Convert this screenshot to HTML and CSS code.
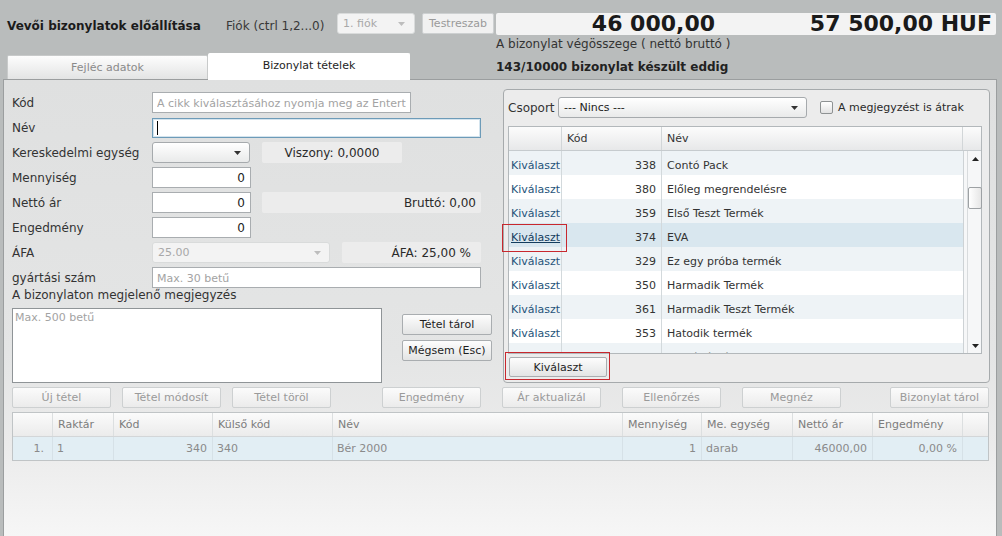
FILE: index.html
```html
<!DOCTYPE html>
<html lang="hu">
<head>
<meta charset="utf-8">
<title>Vevői bizonylatok előállítása</title>
<link rel="stylesheet" href="styles.css">
</head>
<body>
<div class="window">
  <header class="top">
    <div class="top-left">
      <div class="toolbar">
        <span class="title">Vevői bizonylatok előállítása</span>
        <span class="fiok-label">Fiók (ctrl 1,2...0)</span>
        <div class="combo combo-off combo-fiok"><span>1. fiók</span><svg class="caret" viewBox="0 0 7 4"><path d="M0 0h7L3.5 4z"/></svg></div>
        <div class="btn btn-off btn-custom">Testreszab</div>
      </div>
      <div class="tabs">
        <div class="tab">Fejléc adatok</div>
        <div class="tab tab-active">Bizonylat tételek</div>
      </div>
    </div>
    <div class="top-right">
      <div class="totals"><span class="net">46 000,00</span><span class="gross">57 500,00 HUF</span></div>
      <div class="caption">A bizonylat végösszege ( nettó bruttó )</div>
      <div class="count">143/10000 bizonylat készült eddig</div>
    </div>
  </header>

  <main class="panel">
    <div class="upper">
      <section class="form">
        <div class="row"><label>Kód</label><input class="field w-code" placeholder="A cikk kiválasztásához nyomja meg az Entert"></div>
        <div class="row"><label>Név</label><div class="field field-focus w-wide"><span class="text-caret"></span></div></div>
        <div class="row"><label>Kereskedelmi egység</label><div class="combo combo-unit"><span></span><svg class="caret" viewBox="0 0 7 4"><path d="M0 0h7L3.5 4z"/></svg></div><div class="info info-ratio">Viszony: 0,0000</div></div>
        <div class="row"><label>Mennyiség</label><input class="field num w-small" value="0"></div>
        <div class="row"><label>Nettó ár</label><input class="field num w-small" value="0"><div class="info info-gross">Bruttó: 0,00</div></div>
        <div class="row"><label>Engedmény</label><input class="field num w-small" value="0"></div>
        <div class="row"><label>ÁFA</label><div class="combo combo-off combo-vat"><span>25.00</span><svg class="caret" viewBox="0 0 7 4"><path d="M0 0h7L3.5 4z"/></svg></div><div class="info info-vat">ÁFA: 25,00 %</div></div>
        <div class="row row-last"><label>gyártási szám</label><input class="field w-wide" placeholder="Max. 30 betű"></div>
        <div class="note-label">A bizonylaton megjelenő megjegyzés</div>
        <div class="note-area">
          <textarea class="note" placeholder="Max. 500 betű"></textarea>
          <div class="note-buttons">
            <div class="btn btn-note">Tétel tárol</div>
            <div class="btn btn-note">Mégsem (Esc)</div>
          </div>
        </div>
      </section>

      <section class="picker">
        <div class="picker-top">
          <span class="picker-label">Csoport</span>
          <div class="combo combo-group"><span>--- Nincs ---</span><svg class="caret" viewBox="0 0 7 4"><path d="M0 0h7L3.5 4z"/></svg></div>
          <span class="check"></span>
          <span class="check-label">A megjegyzést is átrak</span>
        </div>
        <div class="pgrid">
          <div class="pgrid-head">
            <span class="c1"></span><span class="c2 head-left">Kód</span><span class="c3">Név</span><span class="c4"></span>
          </div>
          <div class="pgrid-body">
            <div class="rows">
              <div class="prow alt"><span class="c1">Kiválaszt</span><span class="c2">338</span><span class="c3">Contó Pack</span></div>
              <div class="prow"><span class="c1">Kiválaszt</span><span class="c2">380</span><span class="c3">Előleg megrendelésre</span></div>
              <div class="prow alt"><span class="c1">Kiválaszt</span><span class="c2">359</span><span class="c3">Első Teszt Termék</span></div>
              <div class="prow sel"><span class="c1 marked">Kiválaszt</span><span class="c2">374</span><span class="c3">EVA</span></div>
              <div class="prow alt"><span class="c1">Kiválaszt</span><span class="c2">329</span><span class="c3">Ez egy próba termék</span></div>
              <div class="prow"><span class="c1">Kiválaszt</span><span class="c2">350</span><span class="c3">Harmadik Termék</span></div>
              <div class="prow alt"><span class="c1">Kiválaszt</span><span class="c2">361</span><span class="c3">Harmadik Teszt Termék</span></div>
              <div class="prow"><span class="c1">Kiválaszt</span><span class="c2">353</span><span class="c3">Hatodik termék</span></div>
              <div class="prow alt partial"><span class="c1">Kiválaszt</span><span class="c2">340</span><span class="c3">Hajvágó gép</span></div>
            </div>
            <div class="vscroll">
              <div class="track">
                <div class="arrow-box"><svg class="sarrow" viewBox="0 0 7 4"><path d="M0 4h7L3.5 0z"/></svg></div>
                <div class="thumb"></div>
                <div class="track-fill"></div>
                <div class="arrow-box arrow-down"><svg class="sarrow" viewBox="0 0 7 4"><path d="M0 0h7L3.5 4z"/></svg></div>
              </div>
            </div>
          </div>
        </div>
        <div class="btn pick-btn">Kiválaszt</div>
      </section>
    </div>

    <div class="actions">
      <div class="btn btn-off">Új tétel</div>
      <div class="btn btn-off gap-s">Tétel módosít</div>
      <div class="btn btn-off gap-s">Tétel töröl</div>
      <div class="btn btn-off gap-l">Engedmény</div>
      <div class="btn btn-off gap-m">Ár aktualizál</div>
      <div class="btn btn-off gap-m">Ellenőrzés</div>
      <div class="btn btn-off gap-m">Megnéz</div>
      <div class="btn btn-off gap-xl">Bizonylat tárol</div>
    </div>

    <div class="items">
      <div class="items-head">
        <span class="k-no"></span>
        <span class="k-store">Raktár</span>
        <span class="k-code">Kód</span>
        <span class="k-ext">Külső kód</span>
        <span class="k-name">Név</span>
        <span class="k-qty">Mennyiség</span>
        <span class="k-unit">Me. egység</span>
        <span class="k-net">Nettó ár</span>
        <span class="k-disc">Engedmény</span>
        <span class="k-end"></span>
      </div>
      <div class="items-row">
        <span class="k-no right">1.</span>
        <span class="k-store">1</span>
        <span class="k-code right">340</span>
        <span class="k-ext">340</span>
        <span class="k-name">Bér 2000</span>
        <span class="k-qty right">1</span>
        <span class="k-unit">darab</span>
        <span class="k-net right">46000,00</span>
        <span class="k-disc right">0,00 %</span>
        <span class="k-end"></span>
      </div>
    </div>
  </main>
</div>
</body>
</html>
```

FILE: styles.css
```css
* { box-sizing: border-box; }

body {
  margin: 0;
  width: 1002px;
  height: 536px;
  overflow: hidden;
  background: #b9bcbc;
  font-family: "DejaVu Sans", "Liberation Sans", sans-serif;
  font-size: 12px;
  color: #2a2a2a;
}

.window { display: flex; flex-direction: column; height: 536px; }

/* ---------- header ---------- */
.top { display: flex; height: 79px; flex: none; }
.top-left { width: 496px; padding-left: 7px; }
.toolbar { display: flex; align-items: center; height: 21px; margin-top: 13px; }
.title { width: 219px; padding-top: 5px; font-weight: bold; color: #1b1b1b; white-space: nowrap; }
.fiok-label { width: 111px; padding-top: 4px; color: #383838; white-space: nowrap; }

.combo {
  display: flex; align-items: center; justify-content: space-between;
  height: 21px; padding: 0 8px 0 5px;
  border: 1px solid #a6aaad; border-radius: 3px;
  background: linear-gradient(#ffffff, #e9eaea);
  font-size: 11px; color: #222;
}
.combo-off { background: #f3f3f3; border-color: #d9dbdb; color: #a8a8a8; }
.combo-fiok { width: 78px; padding-right: 9px; }
.caret { width: 7px; height: 4px; fill: #333; flex: none; }
.combo-off .caret { fill: #bdbdbd; }

.btn {
  display: flex; align-items: center; justify-content: center;
  height: 21px; border: 1px solid #a9adb0; border-radius: 2px;
  background: linear-gradient(#fdfdfd, #e3e4e4);
  font-size: 11px; color: #1e1e1e; white-space: nowrap;
}
.btn-off { color: #9a9a9a; border-color: #cdd0d1; background: linear-gradient(#fbfbfb, #ebebeb); }
.btn-custom { width: 72px; margin-left: 7px; background: #f1f1f1; }

.tabs { display: flex; align-items: flex-end; height: 26px; margin-top: 19px; }
.tab {
  width: 201px; height: 24px;
  display: flex; align-items: center; justify-content: center;
  font-size: 11px; color: #8a8a8a;
  background: linear-gradient(#fdfdfd, #e3e4e4);
  border: 1px solid #c8caca; border-bottom: none; border-radius: 2px 2px 0 0;
}
.tab-active {
  position: relative; z-index: 1;
  width: 202px; height: 27px; margin-bottom: -1px; padding-bottom: 4px;
  background: #ffffff; border-color: #ffffff; color: #1e1e1e;
}

.top-right { width: 500px; }
.totals {
  display: flex; align-items: center; height: 22px; margin-top: 13px;
  background: #f3f3f3; border-radius: 2px;
  font-size: 22px; font-weight: bold; color: #1a1a1a; line-height: 22px;
}
.net { width: 219px; text-align: right; }
.gross { flex: 1; text-align: right; padding-right: 4px; }
.caption { line-height: 16px; padding-top: 1px; color: #333; }
.count { margin-top: 7px; line-height: 16px; font-weight: bold; color: #222; }

/* ---------- panel ---------- */
.panel {
  flex: 1;
  width: 994px; margin-left: 3px;
  border: 1px solid #9b9e9f; border-bottom: none;
  background: linear-gradient(#dfe0e0 0%, #e4e5e5 60%, #ebebeb 80%, #f6f6f6 100%);
  padding-left: 8px;
}
.upper { display: flex; height: 303px; }

.form { width: 491px; padding-top: 12px; }
.row { display: flex; align-items: center; height: 21px; margin-bottom: 4px; }
.row-last { margin-bottom: 0; }
.row label { width: 140px; flex: none; color: #333; white-space: nowrap; }

.field {
  height: 21px; padding: 0 4px;
  border: 1px solid #a9adb0; background: #fff;
  font-family: inherit; font-size: 12px; color: #222;
  display: flex; align-items: center; outline: none;
}
.field::placeholder { color: #a3a3a3; font-size: 11px; }
.num { text-align: right; padding-right: 5px; }
.w-code { width: 259px; }
.w-wide { width: 329px; }
.w-small { width: 99px; }
.field-focus { border-color: #6d9bb8; box-shadow: inset 0 0 0 1px #d4e4ee; height: 20px; }
.text-caret { width: 1px; height: 14px; background: #000; }

.combo-unit { width: 98px; }
.combo-vat { width: 178px; padding-left: 5px; }

.info {
  height: 21px; background: #ececec; border-radius: 2px;
  display: flex; align-items: center; color: #2a2a2a; white-space: nowrap;
}
.info-ratio { width: 140px; margin-left: 12px; justify-content: center; }
.info-gross { width: 219px; margin-left: 11px; justify-content: flex-end; padding-right: 5px; }
.info-vat { width: 139px; margin-left: 12px; justify-content: flex-end; padding-right: 10px; }

.note-label { line-height: 14px; color: #333; }
.note-area { display: flex; margin-top: 6px; }
.note {
  width: 370px; height: 75px; resize: none;
  border: 1px solid #8f9497; background: #fff;
  padding: 2px 2px; font-family: inherit; font-size: 11px; outline: none;
}
.note::placeholder { color: #a3a3a3; }
.note-buttons { display: flex; flex-direction: column; gap: 5px; margin-left: 20px; padding-top: 6px; }
.btn-note { width: 90px; height: 21px; }

/* ---------- picker ---------- */
.picker {
  width: 487px; height: 294px; margin-top: 9px;
  border: 1px solid #a6aaac; border-radius: 4px;
  background: #ececec;
  padding: 7px 7px 5px 4px;
  display: flex; flex-direction: column;
}
.picker-top { display: flex; align-items: center; height: 21px; }
.picker-label { width: 50px; color: #333; }
.combo-group { width: 249px; }
.check {
  width: 13px; height: 13px; margin-left: 13px;
  border: 1px solid #8e9293; border-radius: 2px;
  background: linear-gradient(#ffffff, #e2e2e2);
}
.check-label { margin-left: 5px; font-size: 11px; color: #2a2a2a; white-space: nowrap; }

.pgrid {
  margin-top: 8px; width: 474px; height: 228px;
  border: 1px solid #b3b8bb; background: #fff;
  display: flex; flex-direction: column; font-size: 11px;
}
.pgrid-head {
  display: flex; height: 24px; flex: none;
  border-bottom: 1px solid #c6cbce;
  background: linear-gradient(#fcfcfc, #e7e8e9);
  line-height: 23px; color: #333;
}
.pgrid-head span { border-right: 1px solid #d2d6d8; }
.pgrid-head .c2 { text-align: left; padding-left: 5px; }
.pgrid-head .c4 { width: 18px; border-right: none; }
.pgrid-head .c3 { flex: none; width: 301px; }

.pgrid-body { display: flex; flex: 1; min-height: 0; }
.rows { flex: 1; }
.prow { display: flex; height: 24px; line-height: 18px; }
.prow span { padding-top: 6px; white-space: nowrap; }
.c1 { width: 53px; padding-left: 2px; border-right: 1px solid #d3d9dc; color: #26547a; }
.c2 { width: 100px; text-align: right; padding-right: 5px; border-right: 1px solid #d3d9dc; color: #333; }
.c3 { flex: 1; padding-left: 5px; color: #333; }
.alt { background: #eef3f6; }
.sel { background: #d9e7ef; }
.partial { height: 10px; overflow: hidden; }
.marked { position: relative; color: #133d5e; text-decoration: underline; }
.marked::after {
  content: ""; position: absolute;
  left: -7px; right: -6px; top: 1px; bottom: -5px;
  border: 1px solid #c8282e;
}

.vscroll { width: 18px; border-left: 1px solid #cdd2d5; background: #f6f7f8; display: flex; }
.track {
  flex: 1; margin-left: 3px; border-left: 1px solid #d8dbdd;
  display: flex; flex-direction: column; align-items: center;
}
.arrow-box { height: 16px; width: 100%; display: flex; align-items: center; justify-content: center; }
.arrow-down { height: 14px; }
.sarrow { width: 7px; height: 4px; fill: #222; }
.thumb {
  margin-top: 20px; width: 14px; height: 22px;
  border: 1px solid #9da1a4; border-radius: 2px;
  background: linear-gradient(90deg, #ffffff, #e6e6e6);
}
.track-fill { flex: 1; }

.pick-btn { position: relative; width: 98px; height: 20px; margin-top: 3px; margin-left: 1px; }
.pick-btn::after {
  content: ""; position: absolute;
  left: -5px; right: -4px; top: -6px; bottom: -4px;
  border: 1px solid #c8282e;
}

/* ---------- actions ---------- */
.actions { display: flex; height: 21px; margin-top: 4px; }
.actions .btn { width: 99px; }
.gap-s { margin-left: 11px; }
.gap-l { margin-left: 51px; }
.gap-m { margin-left: 21px; }
.gap-xl { margin-left: 49px; }

/* ---------- items grid ---------- */
.items { width: 977px; margin-top: 4px; border: 1px solid #c0c4c6; font-size: 11px; }
.items-head {
  display: flex; height: 24px; border-bottom: 1px solid #d3d6d8;
  background: linear-gradient(#fbfbfb, #ebebeb);
  color: #7c7c7c; line-height: 23px;
}
.items-head span { border-right: 1px solid #dcdfe0; padding-left: 5px; }
.items-row {
  display: flex; height: 23px; background: #e2eef4;
  color: #8a8a8a; line-height: 24px;
}
.items-row span { border-right: 1px solid #d6e1e7; padding-left: 4px; }
.items-head .k-end, .items-row .k-end { border-right: none; }
.items-row .right { text-align: right; padding-left: 0; padding-right: 5px; }
.items-row .k-no { padding-right: 8px; }

.k-no { width: 40px; }
.k-store { width: 61px; }
.k-code { width: 99px; }
.k-ext { width: 120px; }
.k-name { width: 290px; }
.k-qty { width: 79px; }
.k-unit { width: 91px; }
.k-net { width: 80px; }
.k-disc { width: 90px; }
.k-end { flex: 1; }
```
